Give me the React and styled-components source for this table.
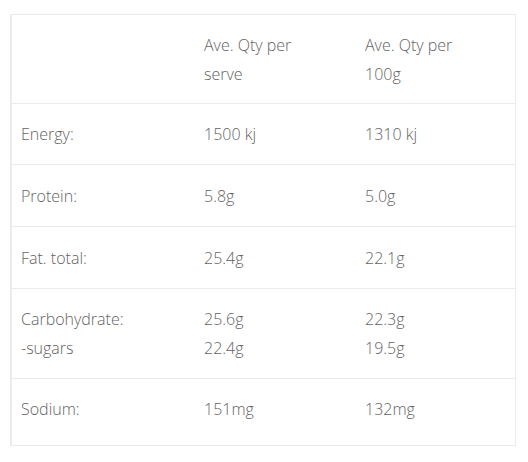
import React from 'react'
import styled, { createGlobalStyle } from 'styled-components'

const GlobalStyle = createGlobalStyle`
  body {
    margin: 0;
    background: #fff;
    font-family: "Open Sans", "Liberation Sans", sans-serif;
  }
`

const Wrapper = styled.div`
  padding: 14px 12px 0 10px;
`

const Table = styled.table`
  width: 100%;
  border-collapse: collapse;
  border: 1px solid #ebebeb;
  border-left-width: 2px;
  color: #636363;
  font-size: 16px;
  font-weight: 300;
  line-height: 29px;
`

const Row = styled.tr`
  border-top: 1px solid #ebebeb;
`

const Cell = styled.td`
  box-sizing: border-box;
  vertical-align: top;
  padding: ${(p) => (p.$tall ? '17px' : '16px')} 30px ${(p) => (p.$last ? '21px' : '15px')} ${(p) => p.$indent || '10px'};
  width: ${(p) => p.$width || 'auto'};
`

const HeadCell = styled(Cell)`
  padding-bottom: 14px;
`

const rows = [
  { label: ['Energy:'], serve: ['1500 kj'], per100: ['1310 kj'] },
  { label: ['Protein:'], serve: ['5.8g'], per100: ['5.0g'] },
  { label: ['Fat. total:'], serve: ['25.4g'], per100: ['22.1g'] },
  { label: ['Carbohydrate:', '-sugars'], serve: ['25.6g', '22.4g'], per100: ['22.3g', '19.5g'] },
  { label: ['Sodium:'], serve: ['151mg'], per100: ['132mg'] }
]

const Lines = ({ items }) => items.map((t, i) => <div key={i}>{t}</div>)

function App() {
  return (
    <Wrapper>
      <GlobalStyle />
      <Table>
        <tbody>
          <Row>
            <HeadCell $width="183px" $indent="9px" />
            <HeadCell $width="161px">Ave. Qty per serve</HeadCell>
            <HeadCell>Ave. Qty per 100g</HeadCell>
          </Row>
          {rows.map((r, i) => {
            const last = i === rows.length - 1
            const tall = i === 1 || i === 2
            return (
              <Row key={i}>
                <Cell $last={last} $tall={tall} $indent="9px">
                  <Lines items={r.label} />
                </Cell>
                <Cell $last={last} $tall={tall}>
                  <Lines items={r.serve} />
                </Cell>
                <Cell $last={last} $tall={tall}>
                  <Lines items={r.per100} />
                </Cell>
              </Row>
            )
          })}
        </tbody>
      </Table>
    </Wrapper>
  )
}

export default App
